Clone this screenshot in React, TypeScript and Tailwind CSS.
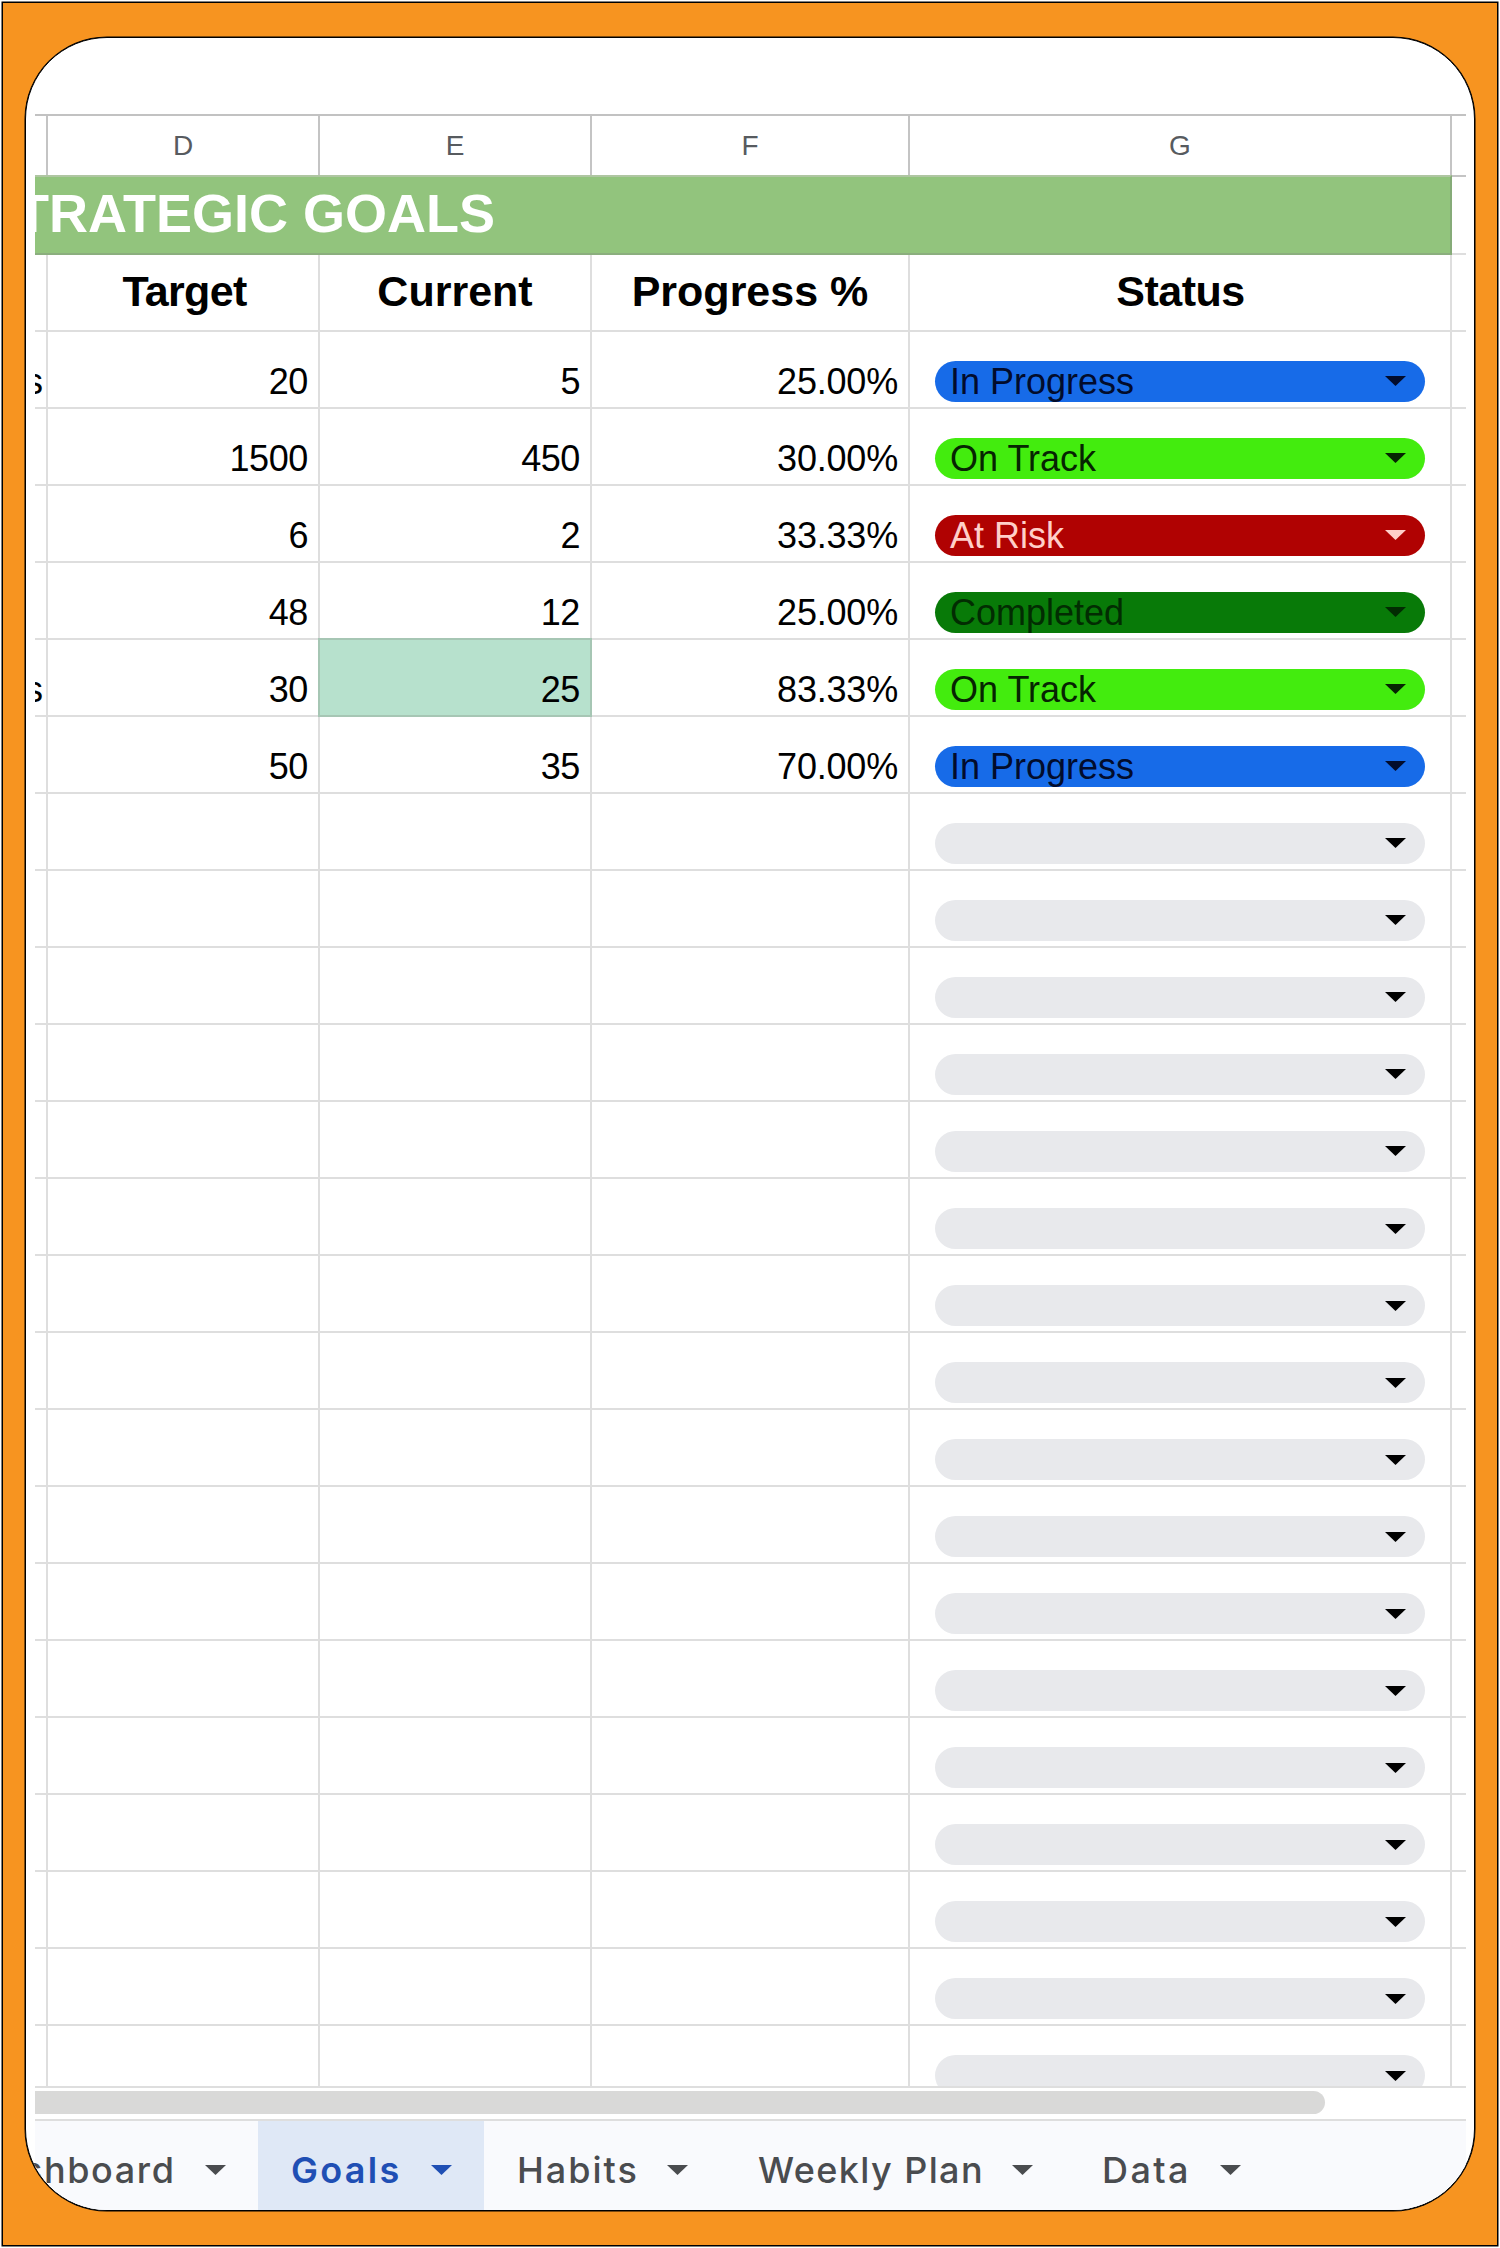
import clsx from "clsx";

interface Goal {
  unit?: string;
  target?: string;
  current?: string;
  progress?: string;
  status?: string;
  highlight?: boolean;
}

const goals: Goal[] = [
  { unit: "s", target: "20", current: "5", progress: "25.00%", status: "In Progress" },
  { target: "1500", current: "450", progress: "30.00%", status: "On Track" },
  { target: "6", current: "2", progress: "33.33%", status: "At Risk" },
  { target: "48", current: "12", progress: "25.00%", status: "Completed" },
  { unit: "s", target: "30", current: "25", progress: "83.33%", status: "On Track", highlight: true },
  { target: "50", current: "35", progress: "70.00%", status: "In Progress" },
];

// Unused rows still carry an empty status dropdown
const rows: Goal[] = [...goals, ...Array.from({ length: 17 }, () => ({}))];

const statusColors: Record<string, string> = {
  "In Progress": "bg-[#176be8] text-[#020c2c]",
  "On Track": "bg-[#43ec0e] text-[#062402]",
  "At Risk": "bg-[#b00202] text-[#ffcfc9]",
  Completed: "bg-[#087a08] text-[#022c02]",
};

const columns = [
  { letter: "D", title: "Target", width: "w-[272px]", text: "pl-[3px] tracking-[-0.7px]" },
  { letter: "E", title: "Current", width: "w-[272px]", text: "" },
  { letter: "F", title: "Progress %", width: "w-[318px]", text: "" },
  { letter: "G", title: "Status", width: "w-[542px]", text: "pl-px tracking-[-0.5px]" },
];

const tabs = [
  { name: "shboard", className: "w-[223px] tracking-[1.6px]", label: "-ml-[12px] w-[182px]" },
  {
    name: "Goals",
    className: "w-[226px] bg-[#dfe8f6] pl-[33px] font-semibold tracking-[2.3px] text-[#1f4fb4]",
    label: "w-[140px]",
  },
  { name: "Habits", className: "w-[241px] pl-[33px] tracking-[2px]", label: "w-[150px]" },
  { name: "Weekly Plan", className: "w-[345px] pl-[33px] tracking-[1.4px]", label: "w-[254px]" },
  { name: "Data", className: "w-[250px] pl-[32px] tracking-[2.4px]", label: "w-[118px]" },
];

const Caret = () => (
  <svg className="h-[10px] w-[21px] shrink-0" viewBox="0 0 21 10" fill="currentColor">
    <path d="M0 0h21L10.5 10z" />
  </svg>
);

const StatusPill = ({ status }: { status?: string }) => (
  <div
    className={clsx(
      "mb-[5px] ml-[25px] flex h-[41px] w-[490px] items-center justify-between rounded-full pr-[19px] pl-[15px]",
      status ? statusColors[status] : "bg-[#e8e9ec] text-black"
    )}
  >
    <span className="pt-[2px]">{status}</span>
    <Caret />
  </div>
);

const GoalRow = ({ goal }: { goal: Goal }) => (
  <div className="flex h-[77.04px] shrink-0 border-b-2 border-[#dedede] text-[36px] leading-none">
    <div className="flex w-[13px] items-end justify-end overflow-hidden border-r-2 border-[#dedede] pr-[3px] pb-[7px]">
      {goal.unit}
    </div>
    <div className="flex w-[272px] items-end justify-end border-r-2 border-[#dedede] pr-[10px] pb-[7px] tracking-[-0.4px]">
      {goal.target}
    </div>
    <div
      className={clsx(
        "flex items-end justify-end pr-[10px] pb-[7px] tracking-[-0.4px]",
        goal.highlight
          ? "relative -mt-[2px] -mb-[2px] -ml-[2px] w-[274px] border-2 border-[#a6c6b4] bg-[#b7e1cd]"
          : "w-[272px] border-r-2 border-[#dedede]"
      )}
    >
      {goal.current}
    </div>
    <div className="flex w-[318px] items-end justify-end border-r-2 border-[#dedede] pr-[10px] pb-[7px] tracking-[-0.2px]">
      {goal.progress}
    </div>
    <div className="flex w-[542px] items-end border-r-2 border-[#dedede]">
      <StatusPill status={goal.status} />
    </div>
  </div>
);

const App = () => {
  return (
    <div className="h-[2248px] w-[1500px] overflow-hidden bg-white pt-[2px] pl-[2px] font-['Liberation_Sans',Arial,sans-serif] text-black">
      <div className="h-[2244px] w-[1496px] border border-black bg-[#f79420] pt-[34px] pl-[22px] shadow-[0_0_0_0.5px_#000]">
        <div className="flex h-[2174px] w-[1450px] flex-col overflow-hidden rounded-[82px] border border-black bg-white pt-[76px] pr-[8px] pl-[9px] shadow-[0_0_0_0.5px_#000]">
          {/* Column letters */}
          <div className="flex h-[61px] shrink-0 border-t-2 border-[#c2c2c2] text-[28px] text-[#575b5f]">
            <div className="w-[13px] border-r-2 border-[#c4c4c4]" />
            {columns.map((column) => (
              <div
                key={column.letter}
                className={clsx("flex items-center justify-center border-r-2 border-[#c4c4c4]", column.width)}
              >
                {column.letter}
              </div>
            ))}
          </div>

          {/* Banner */}
          <div className="flex h-[79.6px] shrink-0">
            <div className="flex w-[1417px] items-end overflow-hidden border-t-2 border-r-2 border-b-2 border-t-[#afc6a2] border-r-[#86ab78] border-b-[#8bae7e] bg-[#92c47d] pb-[13px] text-[54px] leading-none font-bold text-white">
              <span className="-ml-[19px] whitespace-nowrap">TRATEGIC GOALS</span>
            </div>
            <div className="flex-1 border-t-2 border-b-2 border-t-[#c4c4c4] border-b-[#dedede]" />
          </div>

          {/* Field names */}
          <div className="flex h-[77.04px] shrink-0 border-b-2 border-[#dedede] text-[43px] leading-none font-bold">
            <div className="w-[13px] border-r-2 border-[#dedede]" />
            {columns.map((column) => (
              <div
                key={column.title}
                className={clsx(
                  "flex items-end justify-center border-r-2 border-[#dedede] pb-[17px]",
                  column.width,
                  column.text
                )}
              >
                {column.title}
              </div>
            ))}
          </div>

          {/* Goal rows, the last one is cut by the scroll area */}
          <div className="flex h-[1754px] shrink-0 flex-col overflow-hidden">
            {rows.map((goal, index) => (
              <GoalRow key={index} goal={goal} />
            ))}
          </div>

          {/* Horizontal scrollbar */}
          <div className="h-[35.4px] shrink-0 border-t-2 border-b-2 border-[#dedede] pt-[3px]">
            <div className="h-[23px] w-[1290px] rounded-r-full bg-[#d9d9d8]" />
          </div>

          {/* Sheet tabs */}
          <div className="flex flex-1 bg-[#f9fafd] font-[Inter,sans-serif] text-[36px] leading-none font-medium text-[#4a4c4f]">
            {tabs.map((tab) => (
              <div key={tab.name} className={clsx("flex shrink-0 pt-[31px]", tab.className)}>
                <span className={clsx("shrink-0 whitespace-nowrap", tab.label)}>{tab.name}</span>
                <div className="pt-[13px]">
                  <Caret />
                </div>
              </div>
            ))}
          </div>
        </div>
      </div>
    </div>
  );
};

export default App;
